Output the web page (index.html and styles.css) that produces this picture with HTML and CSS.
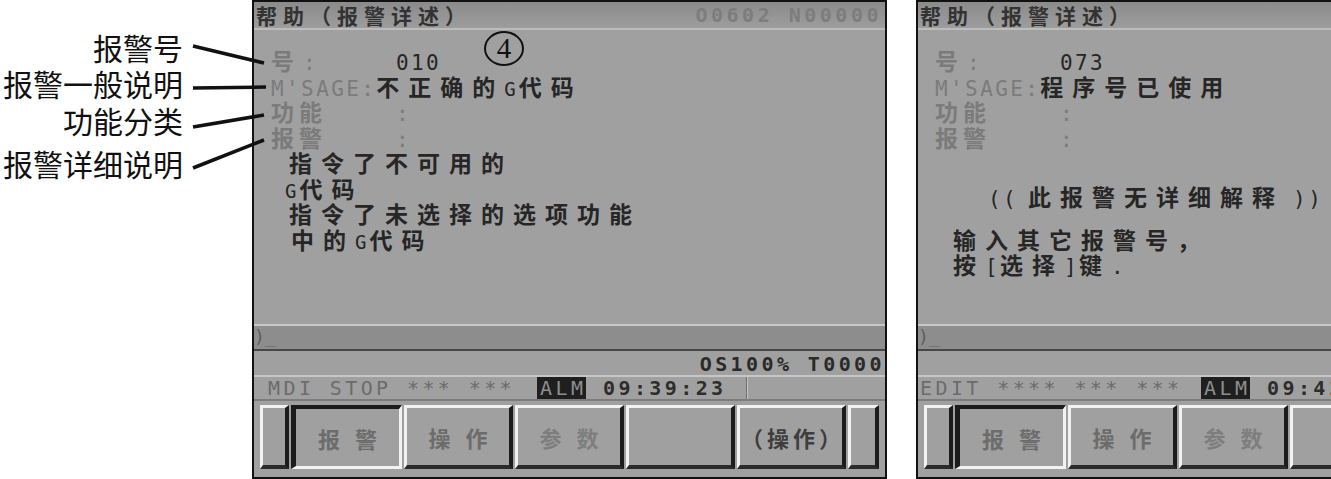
FILE: index.html
```html
<!DOCTYPE html>
<html>
<head>
  <meta charset="utf-8">
  <title>报警详述</title>
  <link rel="stylesheet" href="styles.css">
</head>
<body>
  <div class="page">
    <div class="notes">
      <p class="note n1">报警号</p>
      <p class="note n2">报警一般说明</p>
      <p class="note n3">功能分类</p>
      <p class="note n4">报警详细说明</p>
    </div>

    <section class="screen">
      <header class="title">
        <span class="cn head">帮助（报警详述）</span>
        <span class="en prog">O0602 N00000</span>
      </header>
      <span class="mark">4</span>
      <div class="body">
        <div class="row"><span class="k"><span class="cn dim">号</span><span class="en dim">:</span></span><span class="en ink">010</span></div>
        <div class="row"><span class="en dim">M'SAGE:</span><span class="cn ink">不正确的</span><span class="en g ink">G</span><span class="cn ink">代码</span></div>
        <div class="row"><span class="k"><span class="cn dim lb">功能</span></span><span class="en dim">:</span></div>
        <div class="row"><span class="k"><span class="cn dim lb">报警</span></span><span class="en dim">:</span></div>
        <div class="row in1"><span class="cn ink">指令了不可用的</span></div>
        <div class="row in2"><span class="en g ink">G</span><span class="cn ink">代码</span></div>
        <div class="row in1"><span class="cn ink">指令了未选择的选项功能</span></div>
        <div class="row in3"><span class="cn ink">中的</span><span class="en g ink">G</span><span class="cn ink">代码</span></div>
      </div>
      <div class="cmd">)_</div>
      <div class="info en">OS100% T0000</div>
      <div class="status en">
        <span class="mode">MDI STOP *** ***</span>
        <span class="alm">ALM</span>
        <span class="clock">09:39:23</span>
        <span class="rest"></span>
      </div>
      <div class="keys">
        <span class="key small"></span>
        <span class="key on"><span class="cn">报警</span></span>
        <span class="key"><span class="cn">操作</span></span>
        <span class="key pale"><span class="cn">参数</span></span>
        <span class="key"></span>
        <span class="key dark"><span class="cn paren">（操作）</span></span>
        <span class="key small end"></span>
      </div>
    </section>

    <section class="screen">
      <header class="title">
        <span class="cn head">帮助（报警详述）</span>
      </header>
      <div class="body">
        <div class="row"><span class="k"><span class="cn dim">号</span><span class="en dim">:</span></span><span class="en ink">073</span></div>
        <div class="row"><span class="en dim">M'SAGE:</span><span class="cn ink">程序号已使用</span></div>
        <div class="row"><span class="k"><span class="cn dim lb">功能</span></span><span class="en dim">:</span></div>
        <div class="row"><span class="k"><span class="cn dim lb">报警</span></span><span class="en dim">:</span></div>
        <div class="row"></div>
        <div class="row none"><span class="en ink">((</span><span class="cn ink wide">此报警无详细解释</span><span class="en ink">))</span></div>
        <div class="row"></div>
        <div class="row in4"><span class="cn ink">输入其它报警号，</span></div>
        <div class="row in4"><span class="cn ink">按</span><span class="en ink">[</span><span class="cn ink">选择</span><span class="en ink">]</span><span class="cn ink">键</span><span class="en ink">.</span></div>
      </div>
      <div class="cmd">)_</div>
      <div class="info en"></div>
      <div class="status en">
        <span class="mode edit">EDIT **** *** ***</span>
        <span class="alm">ALM</span>
        <span class="clock">09:41:15</span>
        <span class="rest"></span>
      </div>
      <div class="keys">
        <span class="key small"></span>
        <span class="key on"><span class="cn">报警</span></span>
        <span class="key"><span class="cn">操作</span></span>
        <span class="key pale"><span class="cn">参数</span></span>
        <span class="key"></span>
        <span class="key dark"><span class="cn paren">（操作）</span></span>
        <span class="key small end"></span>
      </div>
    </section>

    <svg class="leaders" width="280" height="200" viewBox="0 0 280 200">
      <line x1="193" y1="46" x2="264" y2="63"/>
      <line x1="193" y1="88" x2="266" y2="87"/>
      <line x1="193" y1="127" x2="264" y2="115"/>
      <line x1="193" y1="168" x2="264" y2="140"/>
    </svg>
  </div>
</body>
</html>
```

FILE: styles.css
```css
* {
  box-sizing: border-box;
}

html, body {
  margin: 0;
}

body {
  width: 1331px;
  height: 479px;
  overflow: hidden;
  background: #fff;
  font-family: "DejaVu Sans Mono", "Noto Sans CJK SC", monospace;
}

.page {
  position: relative;
  display: flex;
  height: 479px;
}

/* callouts on the left */
.notes {
  width: 252px;
  flex: none;
  display: flex;
  flex-direction: column;
  align-items: flex-end;
  padding-right: 69px;
  font-family: "Noto Sans CJK SC", sans-serif;
  font-size: 30px;
  line-height: 30px;
  color: #111;
}

.note {
  margin: 0;
}

.n1 { margin-top: 32px; }
.n2 { margin-top: 6px; }
.n3 { margin-top: 7px; }
.n4 { margin-top: 13px; }

.leaders {
  position: absolute;
  left: 0;
  top: 0;
}

.leaders line {
  stroke: #111;
  stroke-width: 3.5;
}

/* cnc screen */
.screen {
  position: relative;
  width: 635px;
  height: 479px;
  flex: none;
  display: flex;
  flex-direction: column;
  border: 2px solid #111;
  background: #a0a0a0;
  overflow: hidden;
}

.screen + .screen {
  margin-left: 29px;
}

.en {
  font-family: "DejaVu Sans Mono", monospace;
  font-size: 21px;
  letter-spacing: 2.4px;
}

.cn {
  font-family: "Noto Sans CJK SC", sans-serif;
  font-size: 23px;
  font-weight: 700;
  letter-spacing: 9px;
}

.g {
  font-size: 19px;
  letter-spacing: 3px;
}

.dim { color: #7b7b7b; }
.ink { color: #262626; }

.title {
  flex: none;
  height: 28px;
  display: flex;
  justify-content: space-between;
  align-items: center;
  padding: 0 3px 0 2px;
  background: linear-gradient(#8b8b8b, #9d9d9d);
  border-bottom: 2px solid #bcbcbc;
}

.head {
  font-size: 21px;
  letter-spacing: 6px;
  color: #333;
  line-height: 26px;
}

.prog {
  font-size: 20px;
  line-height: 26px;
  letter-spacing: 3.5px;
  font-weight: 700;
  color: #7d7d7d;
}

.mark {
  position: absolute;
  left: 230px;
  top: 29px;
  width: 40px;
  height: 35px;
  border: 2.5px solid #111;
  border-radius: 50%;
  display: flex;
  align-items: center;
  justify-content: center;
  font-family: "Liberation Serif", serif;
  font-size: 29px;
  line-height: 29px;
  color: #111;
}

.body {
  flex: 1;
  min-height: 0;
  overflow: hidden;
  padding: 18px 0 0 17px;
}

.row {
  height: 25.5px;
  line-height: 25.5px;
  white-space: pre;
}

.k {
  display: inline-block;
  width: 125px;
}

.lb {
  letter-spacing: 5px;
}

.in1 { padding-left: 18px; }
.in2 { padding-left: 14px; }
.in3 { padding-left: 20px; }
.in4 { padding-left: 18px; }

.none {
  padding-left: 53px;
  margin-top: 8px;
  margin-bottom: -8px;
}

.wide {
  margin-left: 10px;
  margin-right: 9px;
}

.cmd {
  flex: none;
  height: 27px;
  border-top: 2px solid #c8c8c8;
  border-bottom: 2px solid #474747;
  background: #8d8d8d;
  font-family: "DejaVu Sans Mono", monospace;
  font-size: 18px;
  line-height: 22px;
  color: #5e5e5e;
}

.info {
  flex: none;
  height: 24px;
  line-height: 26px;
  text-align: right;
  font-size: 20px;
  letter-spacing: 3.4px;
  font-weight: 700;
  color: #2a2a2a;
}

.status {
  flex: none;
  height: 26px;
  display: flex;
  border-top: 2px solid #c6c6c6;
  border-bottom: 2px solid #7c7c7c;
  font-size: 20px;
  letter-spacing: 3.4px;
  line-height: 22px;
  white-space: pre;
}

.mode {
  width: 283px;
  padding-left: 14px;
  color: #6c6c6c;
}

.mode.edit {
  padding-left: 2px;
}

.alm {
  width: 49px;
  padding-left: 3px;
  background: #1f1f1f;
  color: #8e8e8e;
}

.clock {
  width: 160px;
  padding-left: 17px;
  font-weight: 700;
  color: #2d2d2d;
}

.rest {
  flex: 1;
  border-left: 1px solid #6e6e6e;
  box-shadow: inset 1px 0 #c4c4c4;
}

.keys {
  flex: none;
  height: 76px;
  display: flex;
  gap: 2px;
  padding: 4px 0 8px 6px;
}

.key {
  flex: none;
  width: 109px;
  display: flex;
  align-items: center;
  justify-content: center;
  border-style: solid;
  border-width: 3px 4px 4px 3px;
  border-color: #f2f2f2 #1c1c1c #2a2a2a #f2f2f2;
  color: #6c6c6c;
}

.key .cn {
  font-size: 22px;
  letter-spacing: 15px;
  margin-right: -15px;
}

.key.on {
  width: 111px;
  border-width: 4px 3px 3px 5px;
  border-color: #1c1c1c #f2f2f2 #f2f2f2 #1c1c1c;
}

.key.small {
  width: 29px;
}

.key.end {
  width: 31px;
}

.key.pale {
  color: #7e7e7e;
}

.key.dark {
  color: #3e3e3e;
}

.key .paren {
  letter-spacing: 4px;
  margin-right: -4px;
}
```
